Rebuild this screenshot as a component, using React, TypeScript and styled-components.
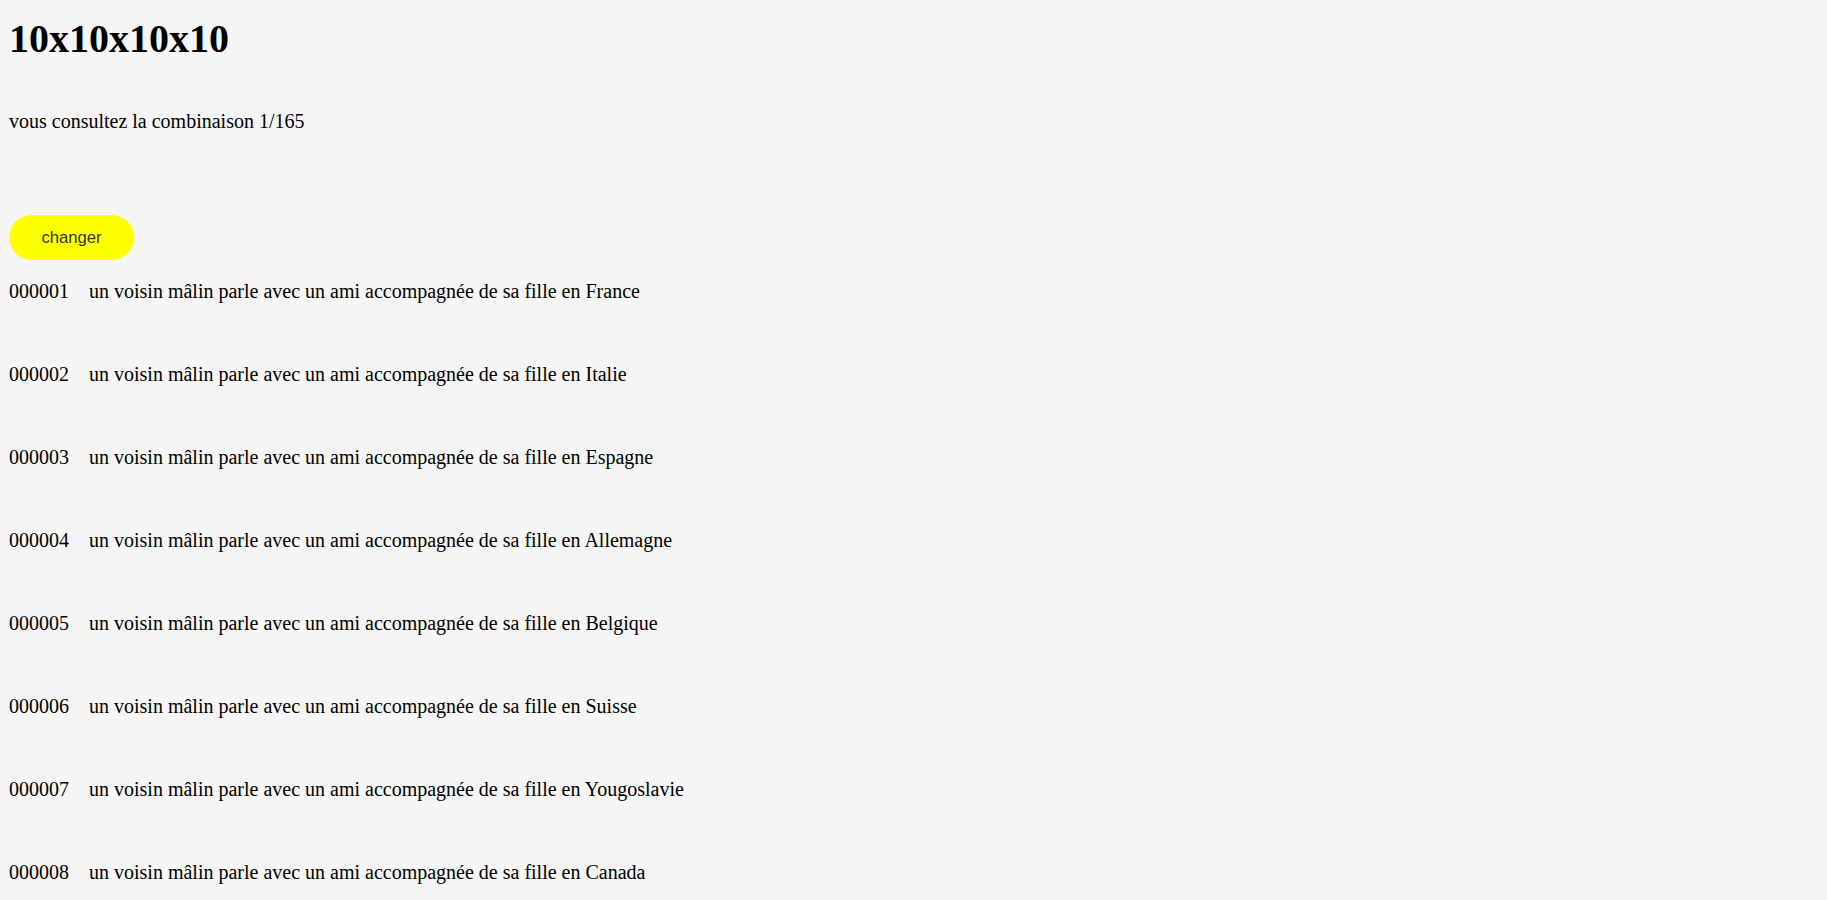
import { createGlobalStyle } from "styled-components"
import styled from "styled-components"

const GlobalStyle = createGlobalStyle`
  html, body {
    margin: 0;
    padding: 0;
    background: #f5f5f5;
  }
  body {
    font-family: "Liberation Serif", "Times New Roman", serif;
    color: #000000;
  }
`

const Page = styled.main`
  display: flex;
  flex-direction: column;
  align-items: flex-start;
  padding: 16px 9px 40px;
`

const Title = styled.h1`
  margin: 0;
  font-size: 40px;
  font-weight: 700;
  line-height: 46px;
`

const Status = styled.p`
  margin: 48px 0 0;
  font-size: 20px;
  line-height: 23px;
`

const ChangeButton = styled.button`
  margin-top: 82px;
  width: 125px;
  height: 45px;
  padding: 0;
  border: none;
  border-radius: 23px;
  background: #ffff00;
  color: #333333;
  font-family: "Liberation Sans", Arial, sans-serif;
  font-size: 16.67px;
  cursor: pointer;
`

const List = styled.ol`
  list-style: none;
  margin: 20px 0 0;
  padding: 0;
  display: flex;
  flex-direction: column;
  gap: 60px;
`

const Row = styled.li`
  display: flex;
  gap: 20px;
  font-size: 20px;
  line-height: 23px;
`

const Code = styled.span`
  flex: none;
`

const pays = [
  "France",
  "Italie",
  "Espagne",
  "Allemagne",
  "Belgique",
  "Suisse",
  "Yougoslavie",
  "Canada",
]

export default function App(): JSX.Element {
  return (
    <>
      <GlobalStyle />
      <Page>
        <Title>10x10x10x10</Title>
        <Status>vous consultez la combinaison 1/165</Status>
        <ChangeButton type="button">changer</ChangeButton>
        <List>
          {pays.map((p, i) => (
            <Row key={p}>
              <Code>{String(i + 1).padStart(6, "0")}</Code>
              <span>un voisin mâlin parle avec un ami accompagnée de sa fille en {p}</span>
            </Row>
          ))}
        </List>
      </Page>
    </>
  )
}
